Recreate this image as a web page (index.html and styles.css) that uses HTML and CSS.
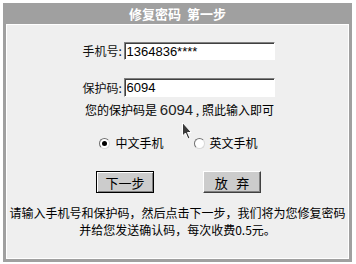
FILE: index.html
```html
<!DOCTYPE html>
<html lang="zh-CN">
<head>
    <meta charset="UTF-8">
    <title>修复密码 第一步</title>
    <link rel="stylesheet" href="styles.css">
</head>
<body>
    <div class="frame">
        <div class="title">修复密码&nbsp;&nbsp;第一步</div>
        <div class="panel">
            <div class="field field-phone">
                <label for="phone">手机号:</label>
                <input type="text" id="phone" value="1364836****">
            </div>
            <div class="field field-code">
                <label for="code">保护码:</label>
                <input type="text" id="code" value="6094">
            </div>
            <div class="hint">您的保护码是 <span class="hint-code">6094</span> , 照此输入即可</div>
            <div class="radios">
                <label class="radio"><span class="dot checked"></span>中文手机</label>
                <label class="radio"><span class="dot"></span>英文手机</label>
            </div>
            <div class="buttons">
                <button class="btn btn-default">下一步</button>
                <button class="btn">放&nbsp;&nbsp;&nbsp;弃</button>
            </div>
            <div class="notice">
                请输入手机号和保护码，然后点击下一步，我们将为您修复密码<br>
                并给您发送确认码，每次收费0.5元。
            </div>
        </div>
        <!-- 鼠标指针 -->
        <svg class="cursor" width="11" height="19" viewBox="0 0 11 19">
            <path d="M0.5 0.5 L0.5 14 L3.5 11 L6 17 L8 16 L5.5 10.5 L9.5 10.5 Z" fill="#3a3a3a" stroke="#ffffff" stroke-width="1"/>
        </svg>
    </div>
</body>
</html>
```

FILE: styles.css
```css
body {
    margin: 0;
    background-color: #fff;
    font-family: "Noto Sans CJK SC", "Liberation Sans", sans-serif;
    font-size: 12px;
    color: #000;
}
.frame {
    position: relative;
    width: 343px;
    height: 256px;
    margin: 3px 0 0 3px;
    border: 3px solid #a0a0a0;
    border-top: 0;
    background-color: #a0a0a0;
    display: flex;
    flex-direction: column;
}
.title {
    height: 21px;
    line-height: 21px;
    text-align: center;
    color: #fff;
    font-weight: bold;
    font-size: 13px;
}
.panel {
    flex: 1;
    background-color: #efefef;
    border: 1px solid #fff;
    display: flex;
    flex-direction: column;
    align-items: center;
}
.field {
    display: flex;
    align-items: center;
    margin-left: 2px;
}
.field-phone {
    margin-top: 17px;
}
.field-code {
    margin-top: 18px;
}
.field label {
    width: 41px;
    line-height: 16px;
    color: #111;
}
.field input {
    width: 151px;
    height: 18px;
    padding: 1px 2px;
    margin: 0;
    box-sizing: border-box;
    border-top: 1px solid #808080;
    border-left: 1px solid #808080;
    border-right: 1px solid #fff;
    border-bottom: 1px solid #fff;
    box-shadow: inset 1px 1px 0 #404040;
    background-color: #fff;
    font-family: "Liberation Sans", sans-serif;
    font-size: 13px;
    color: #000;
}
.field-code input {
    height: 19px;
}
.hint {
    margin-top: 4px;
    line-height: 17px;
    margin-left: 4px;
}
.hint-code {
    font-family: "Liberation Sans", sans-serif;
    font-size: 15px;
    color: #222;
}
.radios {
    display: flex;
    margin-top: 17px;
    margin-left: 2px;
    gap: 30px;
}
.radio {
    display: flex;
    align-items: center;
    gap: 5px;
    line-height: 16px;
}
.dot {
    position: relative;
    width: 9px;
    height: 9px;
    border-radius: 50%;
    background-color: #fff;
    border: 1px solid #707070;
    border-right-color: #d8d8d8;
    border-bottom-color: #d8d8d8;
}
.dot.checked::after {
    content: "";
    position: absolute;
    left: 2px;
    top: 2px;
    width: 5px;
    height: 5px;
    border-radius: 50%;
    background-color: #000;
}
.buttons {
    display: flex;
    gap: 49px;
    margin-top: 20px;
    margin-left: 2px;
}
.btn {
    width: 58px;
    height: 22px;
    padding: 0;
    margin: 0;
    box-sizing: border-box;
    background-color: #cccccc;
    border-top: 1px solid #fff;
    border-left: 1px solid #fff;
    border-right: 1px solid #404040;
    border-bottom: 1px solid #404040;
    box-shadow: inset -1px -1px 0 #808080;
    font-family: "Noto Sans CJK SC", sans-serif;
    font-size: 13px;
    color: #000;
}
.btn-default {
    border: 1px solid #000;
    box-shadow: inset 1px 1px 0 #fff, inset -1px -1px 0 #808080;
}
.notice {
    margin-top: 11px;
    text-align: center;
    line-height: 17px;
}
.cursor {
    position: absolute;
    left: 176px;
    top: 119px;
}
```
